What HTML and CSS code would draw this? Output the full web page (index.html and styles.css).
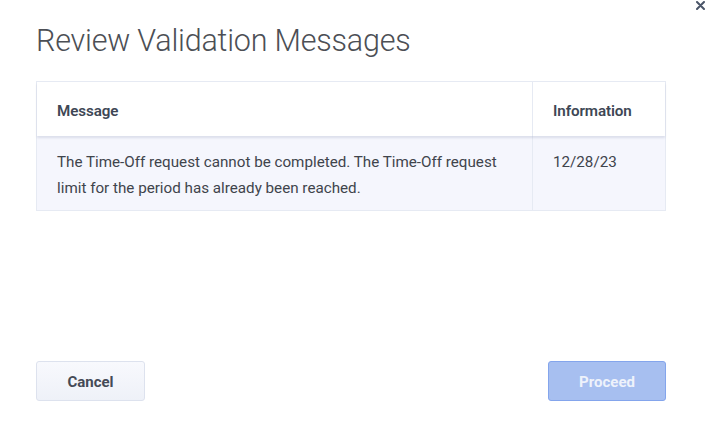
FILE: index.html
```html
<!DOCTYPE html>
<html>
<head>
<meta charset="utf-8">
<link rel="stylesheet" href="styles.css">
</head>
<body>
<div class="modal">
  <button class="close" aria-label="Close">
    <svg width="9" height="9" viewBox="0 0 9 9"><path d="M1 1 L8 8 M8 1 L1 8" stroke="#4a5568" stroke-width="2" stroke-linecap="round"/></svg>
  </button>
  <h1 class="title">Review Validation Messages</h1>
  <div class="table">
    <div class="row head">
      <div class="cell msg">Message</div>
      <div class="cell info">Information</div>
    </div>
    <div class="row body">
      <div class="cell msg">The Time-Off request cannot be completed. The Time-Off request limit for the period has already been reached.</div>
      <div class="cell info">12/28/23</div>
    </div>
  </div>
  <div class="spacer"></div>
  <div class="footer">
    <button class="btn cancel">Cancel</button>
    <button class="btn proceed">Proceed</button>
  </div>
</div>
</body>
</html>
```

FILE: styles.css
```css
html, body {
  margin: 0;
  padding: 0;
  background: #ffffff;
  font-family: Roboto, "Liberation Sans", sans-serif;
}
.modal {
  position: relative;
  width: 708px;
  height: 422px;
  box-sizing: border-box;
  padding: 22px 42px 21px 36px;
  display: flex;
  flex-direction: column;
}
.close {
  position: absolute;
  top: 1px;
  right: 3px;
  border: 0;
  background: none;
  padding: 0;
  width: 9px;
  height: 9px;
  display: flex;
}
.title {
  margin: 0;
  font-weight: 300;
  font-size: 30.5px;
  line-height: 38px;
  color: #4c4f55;
  letter-spacing: -0.2px;
}
.table {
  margin-top: 21px;
  border: 1px solid #e6eaf3;
}
.row {
  display: flex;
}
.cell {
  box-sizing: border-box;
  padding: 0 20px;
}
.cell.msg {
  flex: 1;
}
.cell.info {
  width: 133px;
  border-left: 1px solid #e6eaf3;
}
.head {
  height: 54px;
  align-items: stretch;
  background: #fff;
  box-shadow: 0 2px 2px rgba(40, 60, 110, 0.12);
  position: relative;
  z-index: 1;
}
.head .cell {
  display: flex;
  align-items: center;
  padding-top: 3px;
  font-weight: 600;
  font-size: 15.2px;
  color: #3e4755;
  letter-spacing: -0.1px;
}
.body {
  background: #f5f6fd;
}
.body .cell {
  padding-top: 13px;
  padding-bottom: 9px;
  font-size: 15.2px;
  line-height: 26px;
  color: #3f444c;
}
.body .cell.msg {
  padding-right: 30px;
}
.spacer {
  flex: 1;
}
.footer {
  display: flex;
  justify-content: space-between;
}
.btn {
  height: 40px;
  border-radius: 3px;
  font-family: Roboto, "Liberation Sans", sans-serif;
  font-weight: 700;
  font-size: 15px;
  padding: 2px 0 0 0;
}
.cancel {
  width: 109px;
  background: linear-gradient(#f8f9fd, #eef1f8);
  border: 1px solid #dde2ee;
  color: #444a56;
}
.proceed {
  width: 118px;
  background: #a7bff0;
  border: 1px solid #84a5ec;
  color: #eef2fb;
}
```
